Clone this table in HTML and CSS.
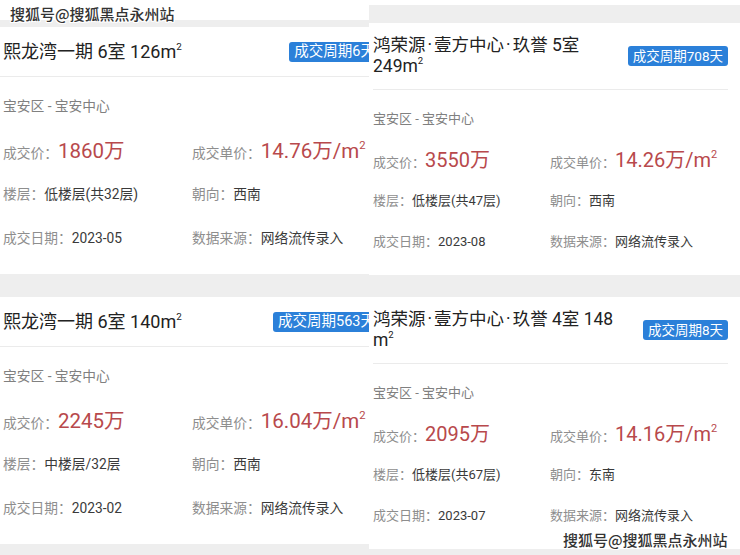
FILE: index.html
```html
<!DOCTYPE html>
<html lang="zh-CN">
<head>
<meta charset="utf-8">
<title>成交记录</title>
<link rel="stylesheet" href="styles.css">
</head>
<body>
<div class="page">
  <div class="col col-l">
    <div class="gap-white-l"></div>
    <div class="band band-a"></div>
    <section class="card card-l">
      <div class="head">
        <h2 class="title">熙龙湾一期 6室 126m<span class="sq">2</span></h2>
        <span class="badge">成交周期6天</span>
      </div>
      <div class="info">
        <div class="region">宝安区 - 宝安中心</div>
        <div class="cell"><span class="lab">成交价：</span><span class="price">1860万</span></div>
        <div class="cell"><span class="lab">成交单价：</span><span class="price">14.76万/m<span class="sq">2</span></span></div>
        <div class="cell"><span class="lab">楼层：</span><span class="val">低楼层(共32层)</span></div>
        <div class="cell"><span class="lab">朝向：</span><span class="val">西南</span></div>
        <div class="cell"><span class="lab">成交日期：</span><span class="val">2023-05</span></div>
        <div class="cell"><span class="lab">数据来源：</span><span class="val">网络流传录入</span></div>
      </div>
    </section>
    <div class="band band-b"></div>
    <section class="card card-l">
      <div class="head">
        <h2 class="title">熙龙湾一期 6室 140m<span class="sq">2</span></h2>
        <span class="badge">成交周期563天</span>
      </div>
      <div class="info">
        <div class="region">宝安区 - 宝安中心</div>
        <div class="cell"><span class="lab">成交价：</span><span class="price">2245万</span></div>
        <div class="cell"><span class="lab">成交单价：</span><span class="price">16.04万/m<span class="sq">2</span></span></div>
        <div class="cell"><span class="lab">楼层：</span><span class="val">中楼层/32层</span></div>
        <div class="cell"><span class="lab">朝向：</span><span class="val">西南</span></div>
        <div class="cell"><span class="lab">成交日期：</span><span class="val">2023-02</span></div>
        <div class="cell"><span class="lab">数据来源：</span><span class="val">网络流传录入</span></div>
      </div>
    </section>
    <div class="band band-c"></div>
  </div>

  <div class="col col-r">
    <div class="gap-white-r"></div>
    <div class="band band-d"></div>
    <section class="card card-r">
      <div class="head">
        <h2 class="title">鸿荣源<span class="dot">·</span>壹方中心<span class="dot">·</span>玖誉 5室<br>249m<span class="sq">2</span></h2>
        <span class="badge">成交周期708天</span>
      </div>
      <div class="info">
        <div class="region">宝安区 - 宝安中心</div>
        <div class="cell"><span class="lab">成交价：</span><span class="price">3550万</span></div>
        <div class="cell"><span class="lab">成交单价：</span><span class="price">14.26万/m<span class="sq">2</span></span></div>
        <div class="cell"><span class="lab">楼层：</span><span class="val">低楼层(共47层)</span></div>
        <div class="cell"><span class="lab">朝向：</span><span class="val">西南</span></div>
        <div class="cell"><span class="lab">成交日期：</span><span class="val">2023-08</span></div>
        <div class="cell"><span class="lab">数据来源：</span><span class="val">网络流传录入</span></div>
      </div>
    </section>
    <div class="band band-e"></div>
    <section class="card card-r">
      <div class="head">
        <h2 class="title">鸿荣源<span class="dot">·</span>壹方中心<span class="dot">·</span>玖誉 4室 148<br>m<span class="sq">2</span></h2>
        <span class="badge">成交周期8天</span>
      </div>
      <div class="info">
        <div class="region">宝安区 - 宝安中心</div>
        <div class="cell"><span class="lab">成交价：</span><span class="price">2095万</span></div>
        <div class="cell"><span class="lab">成交单价：</span><span class="price">14.16万/m<span class="sq">2</span></span></div>
        <div class="cell"><span class="lab">楼层：</span><span class="val">低楼层(共67层)</span></div>
        <div class="cell"><span class="lab">朝向：</span><span class="val">东南</span></div>
        <div class="cell"><span class="lab">成交日期：</span><span class="val">2023-07</span></div>
        <div class="cell"><span class="lab">数据来源：</span><span class="val">网络流传录入</span></div>
      </div>
    </section>
    <div class="band band-f"></div>
  </div>

  <div class="wm wm-tl">搜狐号@搜狐黑点永州站</div>
  <div class="wm wm-br">搜狐号@搜狐黑点永州站</div>
</div>
</body>
</html>
```

FILE: styles.css
```css
* { box-sizing: border-box; }
html, body { margin: 0; padding: 0; background: #fff; }
body {
  font-family: Roboto, "Noto Sans CJK SC", sans-serif;
  color: #222;
}
.page {
  position: relative;
  width: 740px;
  height: 555px;
  overflow: hidden;
  display: grid;
  grid-template-columns: 369px 371px;
}
.col { display: flex; flex-direction: column; overflow: hidden; }
.band { background: #eeeeee; flex: none; }
.gap-white-l { height: 20px; background: #fff; }
.gap-white-r { height: 5px; background: #fff; }
.band-a { height: 7px; }
.band-b { height: 23px; }
.band-c { flex: 1; }
.band-d { height: 18px; }
.band-e { height: 22px; }
.band-f { flex: 1; }

.card { background: #fff; flex: none; }
.head {
  display: flex;
  align-items: center;
  justify-content: space-between;
  border-bottom: 1px solid #ebebeb;
}
.title { margin: 0; font-weight: 400; color: #222; }
.dot { margin: 0 2px; }
.sq { font-size: 0.55em; vertical-align: 0.8em; line-height: 0; }
.badge {
  background: #2b80d9;
  color: #fff;
  border-radius: 3px;
  height: 20px;
  line-height: 20px;
  padding: 0 5px;
  white-space: nowrap;
  flex: none;
}
.info { display: grid; align-items: center; }
.region { grid-column: 1 / -1; color: #808080; }
.cell { white-space: nowrap; }
.lab { color: #8e8e8e; }
.val { color: #3a3a3a; }
.price { color: #b8494c; font-weight: 400; }

/* left panels */
.card-l { width: 380px; padding-bottom: 15px; }
.card-l .head { height: 50px; padding-left: 3px; }
.card-l .title { font-size: 18px; line-height: 26px; }
.card-l .badge { font-size: 14.5px; }
.card-l .info {
  padding: 6px 0 0 3px;
  grid-template-columns: 189px 1fr;
  grid-auto-rows: 44px;
  font-size: 13.75px;
}
.card-l .price { font-size: 20.5px; }

/* right panels */
.card-r { padding: 0 12px 14px 4px; }
.card-r .head { padding: 12px 0; }
.card-r .title { font-size: 17.5px; line-height: 21px; }
.card-r .badge { font-size: 13.5px; }
.card-r .info {
  padding-top: 7px;
  grid-template-columns: 177px 1fr;
  grid-auto-rows: 41px;
  font-size: 13px;
}
.card-r .price { font-size: 20px; }

/* watermarks */
.wm {
  position: absolute;
  font-family: "Noto Sans CJK SC", sans-serif;
  font-size: 15px;
  line-height: 18px;
  font-weight: 500;
  color: #333;
  white-space: nowrap;
  text-shadow: 1px 0 0 #fff, -1px 0 0 #fff, 0 1px 0 #fff, 0 -1px 0 #fff,
               1px 1px 0 #fff, -1px -1px 0 #fff, 1px -1px 0 #fff, -1px 1px 0 #fff;
}
.wm-tl { left: 10px; top: 5px; }
.wm-br { left: 563px; top: 531px; }
```
